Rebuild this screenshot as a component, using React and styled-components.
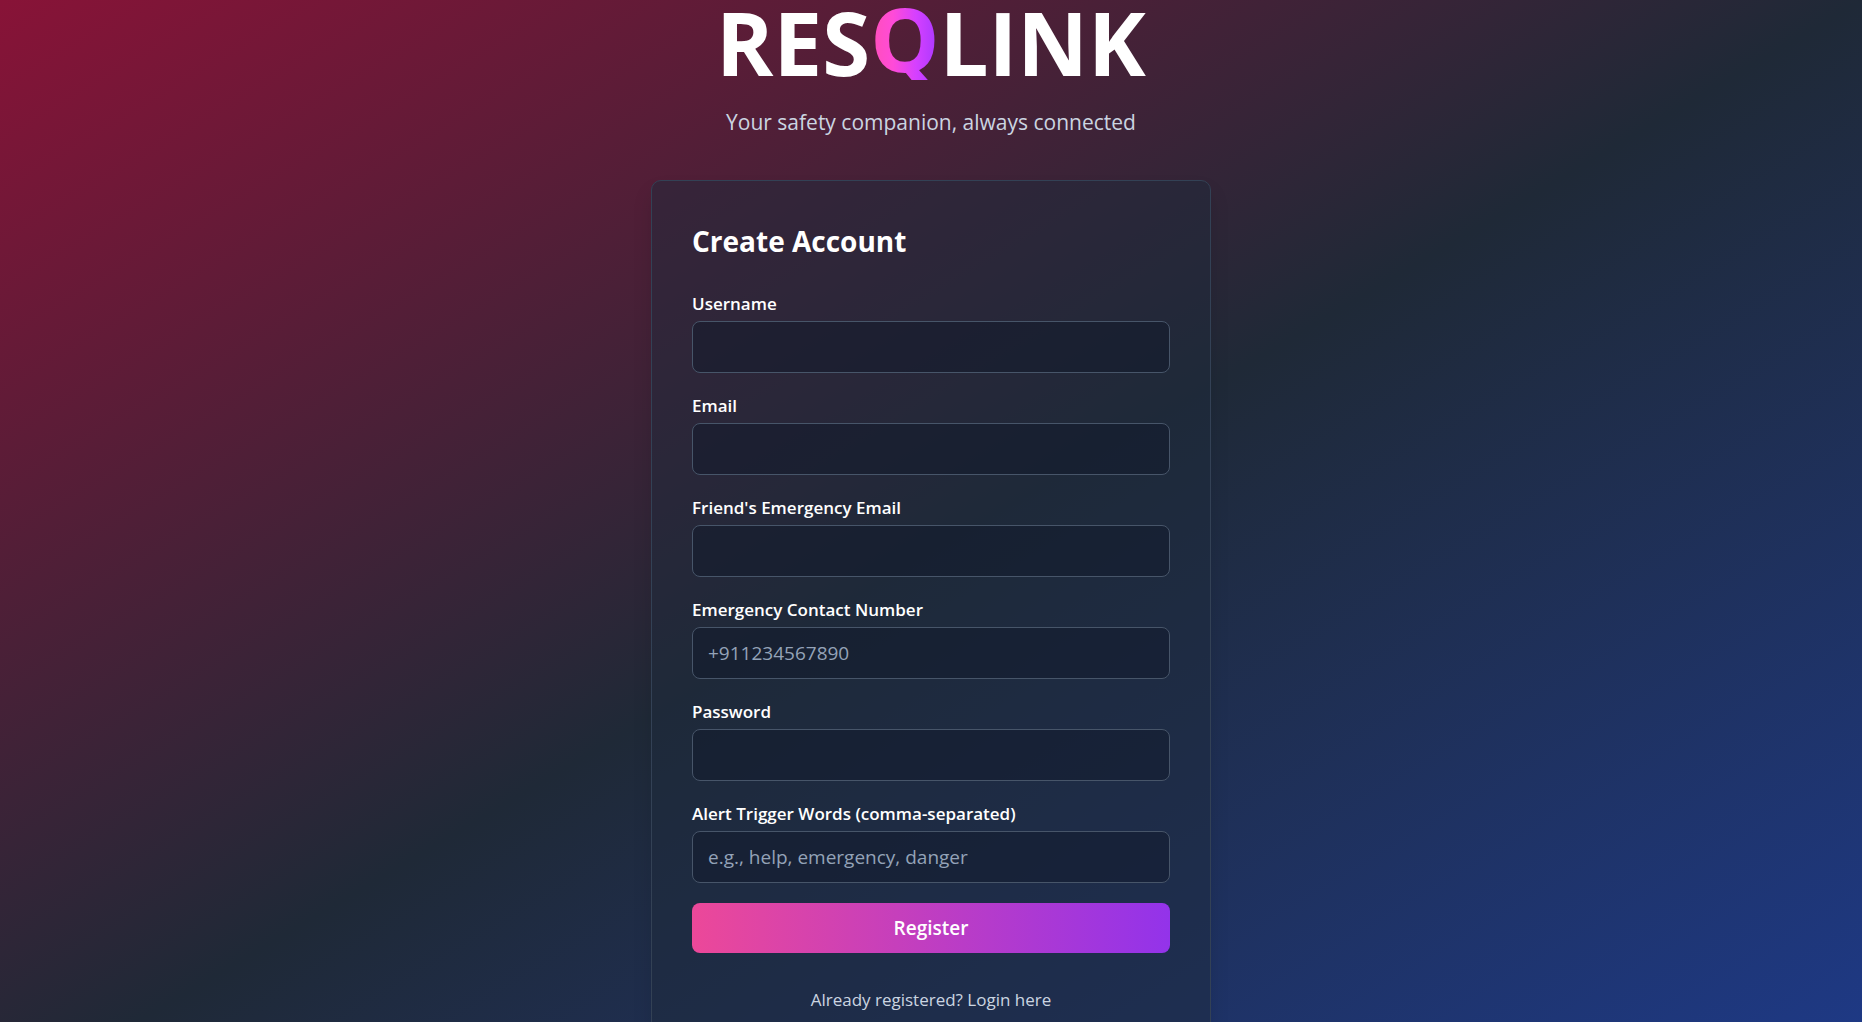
import React from "react";
import styled, { createGlobalStyle } from "styled-components";

const GlobalStyle = createGlobalStyle`
  *, *::before, *::after { box-sizing: border-box; }
  body {
    margin: 0;
    background: #0f172a;
    color: #ffffff;
    font-family: "Segoe UI", "Open Sans", "Noto Sans", sans-serif;
  }
`;

const Page = styled.main`
  min-height: 100vh;
  display: flex;
  flex-direction: column;
  align-items: center;
  padding: 0 20px 50px;
  background: linear-gradient(to bottom right, #881337, #1f2937, #1e3a8a);
`;

const Brand = styled.header`
  margin-bottom: 44px;
  text-align: center;
`;

const Title = styled.h1`
  margin: 0 0 24px;
  font-size: 87px;
  line-height: 84px;
  font-weight: 700;
`;

const Accent = styled.span`
  display: inline-block;
  color: transparent;
  background: linear-gradient(to right, #ff4fb8, #ff4bd8, #d540ff, #a838ff);
  background-clip: text;
  -webkit-background-clip: text;
  transform: translateY(-4px);
`;

const Tagline = styled.p`
  margin: 0;
  font-size: 21px;
  line-height: 28px;
  color: #cbd5e1;
`;

const Card = styled.section`
  width: 100%;
  max-width: 560px;
  padding: 40px;
  border: 1px solid #334155;
  border-radius: 10px;
  background: rgba(30, 41, 59, 0.5);
  box-shadow: 0 12px 20px rgba(0, 0, 0, 0.1);
`;

const Heading = styled.h2`
  margin: 0 0 30px;
  font-size: 28px;
  line-height: 40px;
  font-weight: 700;
`;

const Form = styled.form`
  display: flex;
  flex-direction: column;
  gap: 20px;
`;

const Field = styled.div`
  display: flex;
  flex-direction: column;
  gap: 5px;
`;

const Label = styled.label`
  font-size: 17px;
  line-height: 25px;
  font-weight: 600;
`;

const Input = styled.input`
  width: 100%;
  height: 52px;
  padding: 0 15px;
  border: 1px solid #475569;
  border-radius: 8px;
  background: rgba(15, 23, 42, 0.5);
  color: #ffffff;
  font: inherit;
  font-size: 19px;
  outline: none;

  &::placeholder { color: #94a3b8; opacity: 1; }
  &:focus { border-color: #ec4899; }
`;

const Submit = styled.button`
  height: 50px;
  border: 0;
  border-radius: 8px;
  background: linear-gradient(to right, #ec4899, #9333ea);
  color: #ffffff;
  font: inherit;
  font-size: 19px;
  font-weight: 600;
  cursor: pointer;
`;

const Footer = styled.p`
  margin: 34px 0 0;
  text-align: center;
  font-size: 17px;
  line-height: 25px;
`;

const LoginLink = styled.a`
  color: #cbd5e1;
  text-decoration: none;
  &:hover { color: #ffffff; }
`;

const fields = [
  { id: "username", label: "Username", type: "text" },
  { id: "email", label: "Email", type: "email" },
  { id: "friend-email", label: "Friend's Emergency Email", type: "email" },
  { id: "contact", label: "Emergency Contact Number", type: "tel", placeholder: "+911234567890" },
  { id: "password", label: "Password", type: "password" },
  { id: "triggers", label: "Alert Trigger Words (comma-separated)", type: "text", placeholder: "e.g., help, emergency, danger" },
];

export default function App() {
  return (
    <>
      <GlobalStyle />
      <Page>
        <Brand>
          <Title>RES<Accent>Q</Accent>LINK</Title>
          <Tagline>Your safety companion, always connected</Tagline>
        </Brand>
        <Card>
          <Heading>Create Account</Heading>
          <Form onSubmit={(event) => event.preventDefault()}>
            {fields.map(({ id, label, ...input }) => (
              <Field key={id}>
                <Label htmlFor={id}>{label}</Label>
                <Input id={id} name={id} {...input} />
              </Field>
            ))}
            <Submit type="submit">Register</Submit>
          </Form>
          <Footer>
            <LoginLink href="#login">Already registered? Login here</LoginLink>
          </Footer>
        </Card>
      </Page>
    </>
  );
}
